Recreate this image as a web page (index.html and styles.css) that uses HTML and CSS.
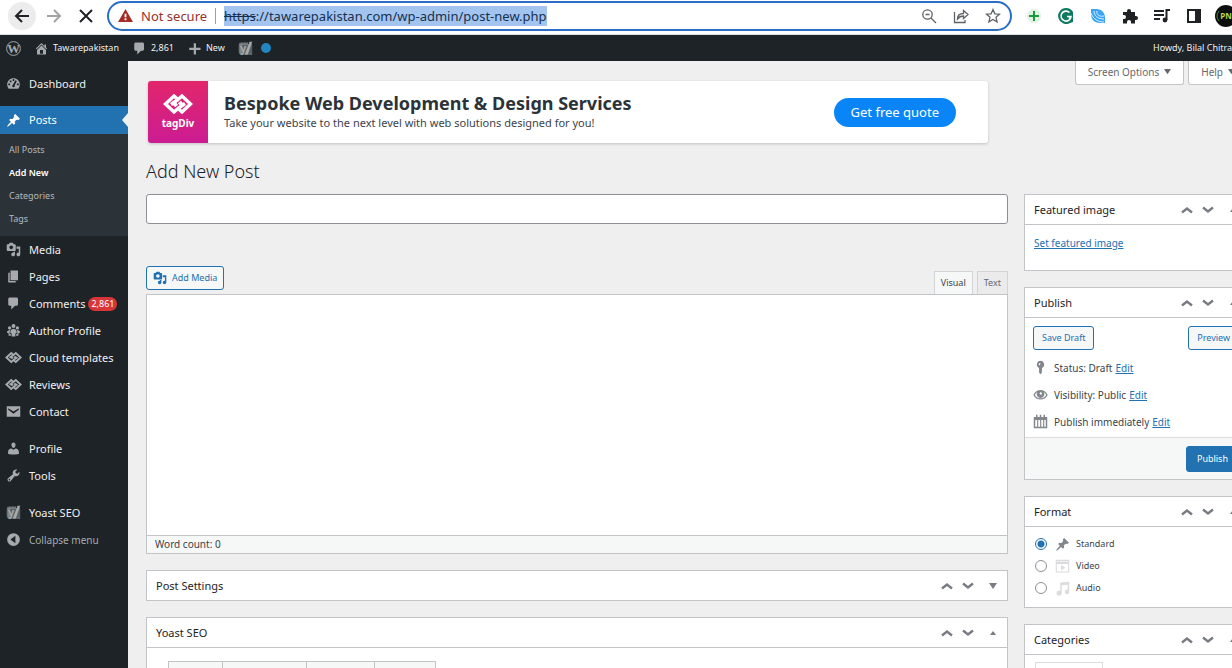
FILE: index.html
```html
<!DOCTYPE html>
<html lang="en">
<head>
<meta charset="utf-8">
<title>Add New Post</title>
<link rel="stylesheet" href="styles.css">
</head>
<body>

<svg class="sprite" aria-hidden="true">
  <symbol id="i-pin" viewBox="0 0 20 20"><path d="M10.44 3.02l1.82-1.82 6.36 6.35-1.83 1.82c-1.05-.68-2.48-.57-3.41.36l-.75.75c-.92.93-1.04 2.35-.35 3.41l-1.83 1.82-2.41-2.41-2.8 2.79c-.42.42-3.38 2.71-3.8 2.29s1.86-3.39 2.28-3.81l2.79-2.79L4.1 9.36l1.83-1.82c1.05.69 2.48.57 3.4-.36l.75-.75c.93-.92 1.05-2.35.36-3.41z"/></symbol>
  <symbol id="i-media" viewBox="0 0 20 20"><path d="M13 11V4c0-.55-.45-1-1-1h-1.67L9 1H5L3.67 3H2c-.55 0-1 .45-1 1v7c0 .55.45 1 1 1h10c.55 0 1-.45 1-1zM7 4.5c1.38 0 2.5 1.12 2.5 2.5S8.38 9.5 7 9.5 4.5 8.38 4.5 7 5.62 4.5 7 4.5zM14 6h5v10.5c0 1.38-1.12 2.5-2.5 2.5S14 17.88 14 16.5s1.12-2.5 2.5-2.5c.17 0 .34.02.5.05V9h-3V6zm-4 8.05V13h2v3.5c0 1.38-1.12 2.5-2.5 2.5S7 17.88 7 16.5 8.12 14 9.5 14c.17 0 .34.02.5.05z"/></symbol>
  <symbol id="i-page" viewBox="0 0 20 20"><path d="M6 15V2h10v13H6zm-1 1h8v2H3V5h2v11z"/></symbol>
  <symbol id="i-comment" viewBox="0 0 20 20"><path d="M5 2h9c1.1 0 2 .9 2 2v7c0 1.1-.9 2-2 2h-2l-5 5v-5H5c-1.1 0-2-.9-2-2V4c0-1.1.9-2 2-2z"/></symbol>
  <symbol id="i-dashboard" viewBox="0 0 20 20"><path fill-rule="evenodd" d="M3.8 17h12.4c1.4-1.5 2.2-3.6 2.2-5.8C18.4 6.5 14.6 3 10 3S1.6 6.5 1.6 11.2c0 2.2.8 4.300 2.200 5.800zM9 4h2v2.500H9zM5 6h2.300v2.300H5zM3 10h2.500v2.200H3zM14.500 10H17v2.200h-2.500zM12.500 5.500l2 1.200-2.900 5.600c.6 1 .2 2.700-1.600 2.700s-2.600-2.200-.8-3.200z"/></symbol>
  <symbol id="i-home" viewBox="0 0 20 20"><path d="M16 8.500l1.530 1.530-1.060 1.060L10 4.600l-6.470 6.490-1.060-1.060L10 2.500l4 4v-2h2v4zm-6-2.460l6 5.990V18H4v-5.970zM12 17v-5H8v5h4z"/></symbol>
  <symbol id="i-plus" viewBox="0 0 20 20"><path d="M18 9v3h-6v6H9v-6H3V9h6V3h3v6h6z"/></symbol>
  <symbol id="i-groups" viewBox="0 0 20 20"><circle cx="10" cy="4" r="2.600"/><circle cx="4.800" cy="6.500" r="2.200"/><circle cx="15.200" cy="6.500" r="2.200"/><path d="M6.500 9l3.500-1.500L13.500 9l1 4-2 1v4h-5v-4l-2-1zM1.500 11l3-1.800 1 .3-1 4.500 2 1V17H3.500v-3l-2-1zM18.500 11l-3-1.800-1 .3 1 4.500-2 1V17h3v-3l2-1z"/></symbol>
  <symbol id="i-tagdiv" viewBox="0 0 30 22"><path fill="none" stroke="currentColor" stroke-width="3.400" d="M2.500 11L11 3l4 3.500L19 3l8.500 8-8.500 8-4-3.500-4 3.500zM8 11.500l7-5M22 10.500l-7 5M11 13l3-2.500M16 11.500L19 9"/></symbol>
  <symbol id="i-mail" viewBox="0 0 20 20"><path fill-rule="evenodd" d="M1 3h18v14H1zM3 5.500v2l7 5.500 7-5.500v-2l-7 4.500z"/></symbol>
  <symbol id="i-user" viewBox="0 0 20 20"><path d="M10 9.250c-2.270 0-2.730-3.440-2.730-3.440C7 4.020 7.820 2 9.970 2c2.160 0 2.980 2.020 2.710 3.810 0 0-.41 3.440-2.680 3.440zm0 2.570L12.720 10c2.390 0 4.520 2.330 4.520 4.530v2.490s-3.650 1.130-7.240 1.130c-3.650 0-7.240-1.130-7.240-1.130v-2.490c0-2.250 1.940-4.480 4.470-4.480z"/></symbol>
  <symbol id="i-tools" viewBox="0 0 20 20"><path d="M16.680 9.770c-1.340 1.340-3.300 1.670-4.950.99l-5.410 6.520c-.99.99-2.590.99-3.580 0s-.99-2.590 0-3.570l6.520-5.420c-.68-1.650-.35-3.610.99-4.950 1.280-1.280 3.120-1.620 4.720-1.060l-2.890 2.890 2.820 2.820 2.860-2.870c.53 1.580.18 3.390-1.080 4.650zM3.810 16.210c.4.39 1.040.39 1.430 0 .4-.4.4-1.040 0-1.430-.39-.4-1.030-.4-1.430 0-.39.39-.39 1.030 0 1.430z"/></symbol>
  <symbol id="i-yoast" viewBox="0 0 20 20"><path opacity=".6" d="M4 2h10l-1 3H5v12h14v1H4a3 3 0 0 1-3-3V5a3 3 0 0 1 3-3z"/><path opacity=".45" d="M3 4h16v14H3z"/><path d="M15.500 1H19l-6 17H9z"/><text x="3" y="14" font-size="14" font-weight="700" font-family="Noto Sans, sans-serif">y</text></symbol>
  <symbol id="i-collapse" viewBox="0 0 20 20"><path fill-rule="evenodd" d="M10 1.500a8.500 8.500 0 1 0 0 17 8.500 8.500 0 0 0 0-17zM12.500 5v10L6 10z"/></symbol>
  <symbol id="i-wp" viewBox="0 0 20 20"><circle cx="10" cy="10" r="9.200" fill="none" stroke="currentColor" stroke-width="1.300"/><text x="10" y="16" font-size="17" font-weight="700" text-anchor="middle" font-family="Liberation Serif, serif">W</text></symbol>
  <symbol id="i-up" viewBox="0 0 12 8"><path fill="none" stroke="currentColor" stroke-width="2.400" d="M1 6.500l5-4 5 4"/></symbol>
  <symbol id="i-down" viewBox="0 0 12 8"><path fill="none" stroke="currentColor" stroke-width="2.400" d="M1 1.500l5 4 5-4"/></symbol>
  <symbol id="i-tri-up" viewBox="0 0 8 8"><path d="M1 6l3-4 3 4z"/></symbol>
  <symbol id="i-tri-down" viewBox="0 0 8 8"><path d="M0 1h8L4 7z"/></symbol>
  <symbol id="i-status" viewBox="0 0 20 20"><path fill-rule="evenodd" d="M10 1a5 5 0 0 1 2 9.500L11.800 17 10 19l-1.800-2-.2-6.500A5 5 0 0 1 10 1zM8.500 4l-1 2.500 1.500.5 1-2.500z"/></symbol>
  <symbol id="i-eye" viewBox="0 0 20 20"><path fill-rule="evenodd" d="M.5 10.500C2.500 6 6 4 10 4s7.500 2 9.500 6.500C17.500 14.500 14 16.500 10 16.500S2.500 14.500.5 10.500zm2 0c1.500 3 4.500 4.500 7.500 4.500s6-1.500 7.500-4.500c-.8-1.800-2-3-3.300-3.800a5 5 0 1 1-8.400 0C4.500 7.500 3.300 8.700 2.500 10.500zM10 6.500L8.500 9l2.500 1.500L12 8z"/></symbol>
  <symbol id="i-calendar" viewBox="0 0 20 20"><path fill-rule="evenodd" d="M4 1h2v3h3V1h2v3h3V1h2v3h3v15H1V4h3zM3 8v9h2.500V8zM7 8v9h2.500V8zM11 8v9h2.500V8zM15 8v9h2V8z"/></symbol>
  <symbol id="i-video" viewBox="0 0 20 20"><path fill-rule="evenodd" d="M1 1h18v17H1zM2.500 6.500v10h15v-10zM3 2.500v1.500h2V2.500zM7 2.500v1.500h2V2.500zM11 2.500v1.500h2V2.500zM15 2.500v1.500h2V2.500z"/><path d="M8 8l6 3.500L8 15z"/></symbol>
  <symbol id="i-audio" viewBox="0 0 20 20"><path d="M7 2l12-1v13.500a3 3 0 1 1-2-2.800V5L9 5.800V16a3.500 3.500 0 1 1-2-3z"/></symbol>
</svg>

<header class="browser">
  <div class="browser-nav">
    <button class="nav-btn nav-back" aria-label="Back"><svg viewBox="0 0 16 16"><path d="M15 8H2M8 2L2 8l6 6"/></svg></button>
    <button class="nav-btn nav-forward" aria-label="Forward"><svg viewBox="0 0 16 16"><path d="M1 8h13M8 2l6 6-6 6"/></svg></button>
    <button class="nav-btn" aria-label="Stop"><svg viewBox="0 0 16 16"><path d="M2 2l12 12M14 2L2 14"/></svg></button>
  </div>
  <div class="address">
    <svg class="warn-icon" viewBox="0 0 16 14"><path fill="#a52a22" d="M8 0l8 14H0z"/><path fill="#fff" d="M7 5h2v4H7zM7 10h2v2H7z"/></svg>
    <span class="warn">Not secure</span>
    <span class="url"><s>https</s>://tawarepakistan.com/wp-admin/post-new.php</span>
    <button class="plain" aria-label="Zoom"><svg viewBox="0 0 16 16"><circle cx="6.500" cy="6.500" r="4.700"/><path d="M10 10l5 5M4.500 6.500h4"/></svg></button>
    <button class="plain" aria-label="Share"><svg viewBox="0 0 16 16"><path d="M1.500 4v10.500H12V12M4.500 11c0-3 2-5.500 6-5.500V2.500L15 6.500l-4.500 4V8C8 8 6 9 4.500 11z"/></svg></button>
    <button class="plain" aria-label="Bookmark"><svg viewBox="0 0 16 16"><path d="M8 1.500l1.900 4.300 4.600.4-3.500 3.100 1.100 4.600L8 11.500l-4.100 2.400L5 9.300 1.500 6.200l4.600-.4z"/></svg></button>
  </div>
  <div class="extensions">
    <svg viewBox="0 0 16 16"><circle cx="8" cy="8" r="7" fill="#dff3e2"/><path stroke="#1a9a3c" stroke-width="2" d="M8 3v10M3 8h10"/></svg>
    <svg viewBox="0 0 16 16"><path fill="#0e7a5f" d="M8 0a8 8 0 0 1 7 4v10l-3 1a8 8 0 1 1-4-15z"/><path fill="none" stroke="#fff" stroke-width="1.600" d="M11.500 4.500A5 5 0 1 0 13 8.500H9M13 8.500l-2 2"/></svg>
    <svg viewBox="0 0 16 16"><path fill="#3aa6f2" d="M1 1h5c6 0 9 4 9 9v5h-5c-6 0-9-4-9-9z"/><path fill="none" stroke="#d8efff" d="M1 5c2 6 7 9 13 9M4 3c0 5 4 8 10 8M7 3c-1 4 3 6 7 5"/></svg>
    <svg viewBox="0 0 16 16"><path fill="#202124" d="M1 4h4V3a2 2 0 0 1 4 0v1h4v4h1a2 2 0 0 1 0 4h-1v3.500H9V14a2 2 0 0 0-4 0v1.500H1V11h1a2 2 0 0 0 0-4H1z"/></svg>
    <svg viewBox="0 0 16 16"><path fill="none" stroke="#202124" stroke-width="2" d="M0 3h10M0 7h10M0 11h6M12.500 12V2H16"/><circle cx="11" cy="12" r="2.400" fill="#202124"/></svg>
    <svg viewBox="0 0 16 16"><path fill="#202124" fill-rule="evenodd" d="M1 1h14v14H1zM3 3v10h6V3z"/></svg>
    <svg class="avatar" viewBox="0 0 22 22"><circle cx="11" cy="11" r="11" fill="#0c0f0b"/><path fill="none" stroke="#3f8a2f" d="M4 6a8 8 0 0 0 0 10"/><text x="11" y="14" font-size="8" font-weight="700" fill="#b8d84a" text-anchor="middle" font-family="Noto Sans, sans-serif">PN</text></svg>
  </div>
</header>

<nav class="adminbar">
  <a href="#" aria-label="WordPress"><svg class="icon"><use href="#i-wp"/></svg></a>
  <a href="#"><svg class="icon"><use href="#i-home"/></svg>Tawarepakistan</a>
  <a href="#"><svg class="icon"><use href="#i-comment"/></svg>2,861</a>
  <a href="#"><svg class="icon"><use href="#i-plus"/></svg>New</a>
  <a href="#" aria-label="Yoast SEO"><svg class="icon"><use href="#i-yoast"/></svg><span class="dot"></span></a>
  <a href="#" class="howdy">Howdy, Bilal Chitrali</a>
</nav>

<div class="page">
  <nav class="menu">
    <ul>
      <li class="first"><a href="#"><svg class="icon"><use href="#i-dashboard"/></svg>Dashboard</a></li>
      <li class="current">
        <a href="#"><svg class="icon"><use href="#i-pin"/></svg>Posts</a>
        <ul class="submenu">
          <li><a href="#">All Posts</a></li>
          <li><a href="#" class="active">Add New</a></li>
          <li><a href="#">Categories</a></li>
          <li><a href="#">Tags</a></li>
        </ul>
      </li>
      <li><a href="#"><svg class="icon"><use href="#i-media"/></svg>Media</a></li>
      <li><a href="#"><svg class="icon"><use href="#i-page"/></svg>Pages</a></li>
      <li><a href="#"><svg class="icon"><use href="#i-comment"/></svg>Comments <span class="count">2,861</span></a></li>
      <li><a href="#"><svg class="icon"><use href="#i-groups"/></svg>Author Profile</a></li>
      <li><a href="#"><svg class="icon wide"><use href="#i-tagdiv"/></svg>Cloud templates</a></li>
      <li><a href="#"><svg class="icon wide"><use href="#i-tagdiv"/></svg>Reviews</a></li>
      <li><a href="#"><svg class="icon"><use href="#i-mail"/></svg>Contact</a></li>
      <li class="sep"><a href="#"><svg class="icon"><use href="#i-user"/></svg>Profile</a></li>
      <li><a href="#"><svg class="icon"><use href="#i-tools"/></svg>Tools</a></li>
      <li class="sep"><a href="#"><svg class="icon"><use href="#i-yoast"/></svg>Yoast SEO</a></li>
      <li><button class="collapse"><svg class="icon"><use href="#i-collapse"/></svg>Collapse menu</button></li>
    </ul>
  </nav>

  <main class="content">
    <div class="top">
      <section class="banner">
        <div class="brand"><svg><use href="#i-tagdiv"/></svg><span>tagDiv</span></div>
        <div class="pitch">
          <h2>Bespoke Web Development &amp; Design Services</h2>
          <p>Take your website to the next level with web solutions designed for you!</p>
        </div>
        <a href="#" class="quote">Get free quote</a>
      </section>
      <div class="screen-meta">
        <button>Screen Options <svg><use href="#i-tri-down"/></svg></button>
        <button>Help <svg><use href="#i-tri-down"/></svg></button>
      </div>
    </div>

    <h1>Add New Post</h1>

    <div class="columns">
      <div class="main-col">
        <input class="title" type="text" aria-label="Add title">

        <div class="editor-tools">
          <button class="button"><svg class="icon"><use href="#i-media"/></svg>Add Media</button>
          <div class="editor-tabs">
            <button class="on">Visual</button>
            <button>Text</button>
          </div>
        </div>
        <div class="editor">
          <textarea aria-label="Post content"></textarea>
          <div class="word-count">Word count: 0</div>
        </div>

        <section class="postbox closed">
          <div class="box-head">
            <h2>Post Settings</h2>
            <button aria-label="Move up"><svg><use href="#i-up"/></svg></button>
            <button aria-label="Move down"><svg><use href="#i-down"/></svg></button>
            <button class="toggle" aria-label="Toggle"><svg><use href="#i-tri-down"/></svg></button>
          </div>
        </section>

        <section class="postbox">
          <div class="box-head">
            <h2>Yoast SEO</h2>
            <button aria-label="Move up"><svg><use href="#i-up"/></svg></button>
            <button aria-label="Move down"><svg><use href="#i-down"/></svg></button>
            <button class="toggle" aria-label="Toggle"><svg><use href="#i-tri-up"/></svg></button>
          </div>
          <div class="yoast-tabs"><span></span><span></span><span></span><span></span></div>
        </section>
      </div>

      <aside class="side-col">
        <section class="postbox">
          <div class="box-head">
            <h2>Featured image</h2>
            <button aria-label="Move up"><svg><use href="#i-up"/></svg></button>
            <button aria-label="Move down"><svg><use href="#i-down"/></svg></button>
            <button class="toggle" aria-label="Toggle"><svg><use href="#i-tri-up"/></svg></button>
          </div>
          <div class="featured"><a href="#">Set featured image</a></div>
        </section>

        <section class="postbox">
          <div class="box-head">
            <h2>Publish</h2>
            <button aria-label="Move up"><svg><use href="#i-up"/></svg></button>
            <button aria-label="Move down"><svg><use href="#i-down"/></svg></button>
            <button class="toggle" aria-label="Toggle"><svg><use href="#i-tri-up"/></svg></button>
          </div>
          <div class="drafts">
            <button class="button">Save Draft</button>
            <button class="button">Preview</button>
          </div>
          <ul class="publish-info">
            <li><svg class="icon"><use href="#i-status"/></svg>Status: Draft <a href="#">Edit</a></li>
            <li><svg class="icon"><use href="#i-eye"/></svg>Visibility: Public <a href="#">Edit</a></li>
            <li><svg class="icon"><use href="#i-calendar"/></svg>Publish immediately <a href="#">Edit</a></li>
          </ul>
          <div class="publish-foot"><button class="button primary">Publish</button></div>
        </section>

        <section class="postbox">
          <div class="box-head">
            <h2>Format</h2>
            <button aria-label="Move up"><svg><use href="#i-up"/></svg></button>
            <button aria-label="Move down"><svg><use href="#i-down"/></svg></button>
            <button class="toggle" aria-label="Toggle"><svg><use href="#i-tri-up"/></svg></button>
          </div>
          <div class="formats">
            <label><input type="radio" name="format" checked><svg class="icon dark"><use href="#i-pin"/></svg>Standard</label>
            <label><input type="radio" name="format"><svg class="icon"><use href="#i-video"/></svg>Video</label>
            <label><input type="radio" name="format"><svg class="icon"><use href="#i-audio"/></svg>Audio</label>
          </div>
        </section>

        <section class="postbox">
          <div class="box-head">
            <h2>Categories</h2>
            <button aria-label="Move up"><svg><use href="#i-up"/></svg></button>
            <button aria-label="Move down"><svg><use href="#i-down"/></svg></button>
            <button class="toggle" aria-label="Toggle"><svg><use href="#i-tri-up"/></svg></button>
          </div>
          <div class="cat-tab"></div>
        </section>
      </aside>
    </div>
  </main>
</div>

</body>
</html>
```

FILE: styles.css
```css
* {
	box-sizing: border-box;
}

html, body {
	height: 100%;
}

body {
	margin: 0;
	display: flex;
	flex-direction: column;
	overflow: hidden;
	background: #efeff0;
	color: #3c434a;
	font-family: "Noto Sans", "Open Sans", sans-serif;
	font-size: 10px;
	line-height: 16px;
}

h1, h2, p, ul {
	margin: 0;
	padding: 0;
	font-weight: 400;
}

ul {
	list-style: none;
}

button {
	font: inherit;
	color: inherit;
	border: 0;
	padding: 0;
	background: none;
}

a {
	color: #2271b1;
}

svg {
	display: block;
	fill: currentColor;
	flex: none;
}

.sprite {
	display: none;
}

.icon {
	width: 15px;
	height: 15px;
}

/* browser toolbar */
.browser {
	display: flex;
	flex: none;
	align-items: center;
	height: 35px;
	padding: 0 0 3px 8px;
	background: #fff;
	border-bottom: 1px solid #dcdee0;
}

.browser-nav {
	display: flex;
	gap: 4px;
	flex: none;
}

.nav-btn {
	display: flex;
	align-items: center;
	justify-content: center;
	width: 28px;
	height: 28px;
	border-radius: 50%;
	color: #202124;
}

.nav-back {
	background: #ececec;
}

.nav-forward {
	color: #a3a3a3;
}

.nav-btn svg {
	width: 16px;
	height: 16px;
	fill: none;
	stroke: currentColor;
	stroke-width: 2;
}

.address {
	display: flex;
	flex: 1;
	align-items: center;
	height: 30px;
	margin-left: 7px;
	padding: 0 9px;
	border: 2px solid #2a6ec8;
	border-radius: 15px;
	font-size: 13px;
	white-space: nowrap;
}

.warn-icon {
	width: 15px;
	height: 13px;
}

.warn {
	margin-left: 8px;
	padding-right: 8px;
	border-right: 1px solid #9aa0a6;
	color: #96322c;
}

.url {
	margin: 0 auto 0 8px;
	line-height: 20px;
	background: #a3c4ef;
	color: #15304f;
}

.plain {
	margin-left: 16px;
}

.plain svg {
	width: 16px;
	height: 16px;
	fill: none;
	stroke: #5f6368;
	stroke-width: 1.3;
}

.extensions {
	display: flex;
	flex: none;
	align-items: center;
	gap: 16px;
	width: 220px;
	padding-left: 14px;
	overflow: hidden;
}

.extensions svg {
	width: 16px;
	height: 16px;
}

.extensions .avatar {
	width: 22px;
	height: 22px;
	margin-left: -3px;
}

/* admin bar */
.adminbar {
	display: flex;
	flex: none;
	align-items: center;
	gap: 13px;
	height: 26px;
	padding-left: 6px;
	background: #1d2327;
	font-size: 9px;
	white-space: nowrap;
}

.adminbar a {
	display: flex;
	align-items: center;
	gap: 4px;
	color: #f0f0f1;
	text-decoration: none;
}

.adminbar .icon {
	color: #a7aaad;
}

.adminbar .howdy {
	width: 79px;
	margin-left: auto;
}

.dot {
	width: 10px;
	height: 10px;
	margin-left: 4px;
	border-radius: 50%;
	background: #2286c0;
}

.page {
	display: flex;
	flex: 1;
	min-height: 0;
}

/* left menu */
.menu {
	flex: none;
	width: 128px;
	padding-top: 9px;
	background: #1d2327;
	font-size: 11px;
}

.menu li > a,
.collapse {
	display: flex;
	align-items: center;
	gap: 8px;
	height: 27px;
	padding-left: 6px;
	color: #f0f0f1;
	text-decoration: none;
	white-space: nowrap;
}

.menu .icon {
	color: #a7aaad;
}

.menu .icon.wide {
	width: 17px;
	margin: 0 -1px;
}

.menu .first {
	margin-bottom: 9px;
}

.menu .sep {
	margin-top: 10px;
}

.menu .current > a {
	position: relative;
	height: 28px;
	background: #2271b1;
	color: #fff;
}

.menu .current > a .icon {
	color: #fff;
}

/* notch that points at the current page */
.menu .current > a::after {
	content: "";
	position: absolute;
	right: 0;
	top: 7px;
	border: 7px solid transparent;
	border-left-width: 0;
	border-right: 6px solid #efeff0;
}

.submenu {
	padding: 4px 0 6px;
	background: #2c3338;
	font-size: 9px;
}

.menu .submenu a {
	height: 23px;
	padding-left: 9px;
	color: #b4b9be;
}

.menu .submenu .active {
	color: #fff;
	font-weight: 600;
}

.count {
	margin-left: -5px;
	padding: 0 3px;
	border-radius: 8px;
	background: #d63638;
	color: #fff;
	font-size: 9px;
	line-height: 14px;
}

.menu .collapse {
	color: #a7aaad;
	font-size: 10px;
}

/* content runs a little past the right edge of the window */
.content {
	flex: 1;
	min-width: 0;
	margin-right: -16px;
	padding-left: 18px;
}

.top {
	display: flex;
	align-items: flex-start;
	justify-content: space-between;
}

.banner {
	display: flex;
	flex: 0 1 840px;
	align-items: center;
	height: 62px;
	margin: 20px 0 0 2px;
	padding-right: 32px;
	border-radius: 3px;
	overflow: hidden;
	background: #fff;
	box-shadow: 0 1px 3px rgba(0, 0, 0, .2);
}

.brand {
	display: flex;
	flex-direction: column;
	align-items: center;
	justify-content: center;
	width: 60px;
	height: 62px;
	background: linear-gradient(#e2266b, #cb1c93);
	color: #fff;
	font-size: 10px;
	font-weight: 700;
}

.brand svg {
	width: 30px;
	height: 22px;
}

.pitch {
	flex: 1;
	padding: 0 0 2px 16px;
	white-space: nowrap;
}

.pitch h2 {
	color: #2c3338;
	font-size: 18px;
	font-weight: 700;
	line-height: 24px;
}

.pitch p {
	font-size: 11px;
}

.quote {
	padding: 0 17px;
	border-radius: 15px;
	background: #0a85f8;
	color: #fff;
	font-size: 13px;
	line-height: 29px;
	text-decoration: none;
}

.screen-meta {
	display: flex;
	gap: 4px;
}

.screen-meta button {
	display: flex;
	align-items: center;
	gap: 5px;
	height: 24px;
	padding: 0 12px 2px;
	border: 1px solid #c3c4c7;
	border-top: 0;
	border-radius: 0 0 3px 3px;
	background: #fff;
	color: #646970;
	white-space: nowrap;
}

.screen-meta svg {
	width: 7px;
	height: 7px;
}

h1 {
	padding: 16px 0 11px;
	color: #1d2327;
	font-size: 18px;
	font-weight: 300;
	line-height: 24px;
}

.columns {
	display: flex;
	align-items: flex-start;
	gap: 16px;
}

.main-col {
	flex: 1;
	min-width: 0;
}

.side-col {
	width: 224px;
}

.title {
	display: block;
	width: 100%;
	height: 30px;
	border: 1px solid #8c8f94;
	border-radius: 3px;
	background: #fff;
}

.button {
	display: flex;
	align-items: center;
	gap: 5px;
	height: 24px;
	padding: 0 8px;
	border: 1px solid #2271b1;
	border-radius: 3px;
	background: #f6f7f7;
	color: #2271b1;
	font-size: 9px;
	white-space: nowrap;
}

.button .icon {
	width: 14px;
	height: 14px;
}

.button.primary {
	height: 26px;
	padding: 0 10px;
	background: #2271b1;
	color: #fff;
}

.editor-tools {
	display: flex;
	align-items: flex-start;
	justify-content: space-between;
	padding-top: 42px;
}

.editor-tools .button {
	padding: 0 6px;
}

.editor-tabs {
	display: flex;
	gap: 4px;
	padding-top: 5px;
}

.editor-tabs button {
	height: 23px;
	padding: 0 6px;
	border: 1px solid #d2d4d7;
	border-bottom: 0;
	background: #ebebec;
	color: #646970;
	font-size: 9px;
}

.editor-tabs .on {
	background: #f6f7f7;
	color: #3c434a;
}

.editor {
	border: 1px solid #c3c4c7;
	background: #fff;
}

.editor textarea {
	display: block;
	width: 100%;
	height: 240px;
	border: 0;
	resize: none;
}

.word-count {
	padding: 0 8px;
	border-top: 1px solid #c3c4c7;
	background: #f6f7f7;
	line-height: 17px;
}

.postbox {
	margin-bottom: 16px;
	border: 1px solid #c3c4c7;
	background: #fff;
}

.main-col .postbox {
	margin: 16px 0 0;
}

.box-head {
	display: flex;
	align-items: center;
	height: 30px;
	padding: 0 10px 0 9px;
	border-bottom: 1px solid #c3c4c7;
	color: #787c82;
}

.closed .box-head {
	height: 29px;
	border-bottom: 0;
}

.box-head h2 {
	flex: 1;
	color: #1d2327;
	font-size: 11px;
}

.box-head svg {
	width: 12px;
	height: 8px;
	margin-left: 9px;
}

.box-head .toggle svg {
	width: 8px;
	margin-left: 15px;
}

.yoast-tabs {
	display: flex;
	padding: 13px 0 0 21px;
}

.yoast-tabs span {
	flex: 0 0 68px;
	height: 24px;
	border: 1px solid #c3c4c7;
	border-left-width: 0;
	background: #f6f7f7;
}

.yoast-tabs span:first-child {
	flex-basis: 55px;
	border-left-width: 1px;
}

.yoast-tabs span:nth-child(2) {
	flex-basis: 84px;
}

.yoast-tabs span:last-child {
	flex-basis: 61px;
}

.featured {
	padding: 10px 9px 19px;
}

.drafts {
	display: flex;
	justify-content: space-between;
	padding: 8px 8px 4px;
}

.publish-info li {
	display: flex;
	align-items: center;
	gap: 3px;
	height: 27px;
	padding-left: 8px;
}

.publish-info .icon {
	margin-right: 3px;
	color: #82878c;
}

.publish-foot {
	display: flex;
	justify-content: flex-end;
	margin-top: 2px;
	padding: 8px 8px 7px;
	border-top: 1px solid #dcdcde;
	background: #f6f7f7;
}

.formats {
	padding: 6px 10px 8px;
	font-size: 9px;
}

.formats label {
	display: flex;
	align-items: center;
	gap: 6px;
	height: 22px;
}

.formats input {
	appearance: none;
	width: 12px;
	height: 12px;
	margin: 0 2px 0 0;
	border: 1px solid #8c8f94;
	border-radius: 50%;
	background: #fff;
}

.formats input:checked {
	border-color: #2271b1;
	background: radial-gradient(#2271b1 3px, #fff 4px);
}

.formats .icon {
	color: #dcdcde;
}

.formats .dark {
	color: #82878c;
}

.cat-tab {
	width: 68px;
	height: 24px;
	margin: 7px 10px 0;
	border: 1px solid #dcdcde;
}
```
